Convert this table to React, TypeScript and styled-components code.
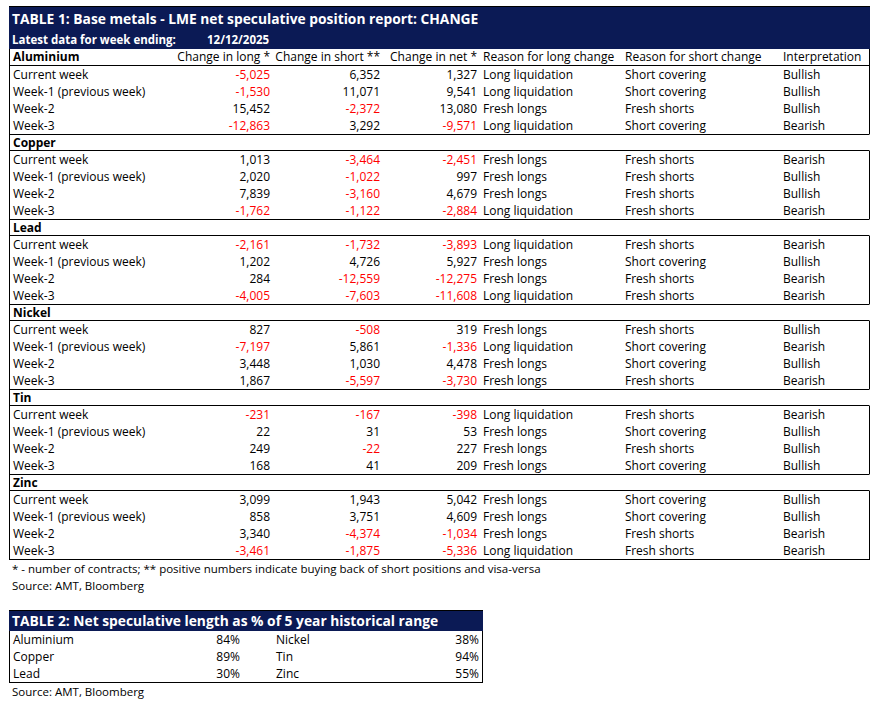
import { createGlobalStyle } from 'styled-components';
import styled from 'styled-components';
import { Fragment } from 'react';

type Row = [string, number, number, number, string, string, string];

const sections: { name: string; rows: Row[] }[] = [
  {
    name: 'Aluminium',
    rows: [
      ['Current week', -5025, 6352, 1327, 'Long liquidation', 'Short covering', 'Bullish'],
      ['Week-1 (previous week)', -1530, 11071, 9541, 'Long liquidation', 'Short covering', 'Bullish'],
      ['Week-2', 15452, -2372, 13080, 'Fresh longs', 'Fresh shorts', 'Bullish'],
      ['Week-3', -12863, 3292, -9571, 'Long liquidation', 'Short covering', 'Bearish'],
    ],
  },
  {
    name: 'Copper',
    rows: [
      ['Current week', 1013, -3464, -2451, 'Fresh longs', 'Fresh shorts', 'Bearish'],
      ['Week-1 (previous week)', 2020, -1022, 997, 'Fresh longs', 'Fresh shorts', 'Bullish'],
      ['Week-2', 7839, -3160, 4679, 'Fresh longs', 'Fresh shorts', 'Bullish'],
      ['Week-3', -1762, -1122, -2884, 'Long liquidation', 'Fresh shorts', 'Bearish'],
    ],
  },
  {
    name: 'Lead',
    rows: [
      ['Current week', -2161, -1732, -3893, 'Long liquidation', 'Fresh shorts', 'Bearish'],
      ['Week-1 (previous week)', 1202, 4726, 5927, 'Fresh longs', 'Short covering', 'Bullish'],
      ['Week-2', 284, -12559, -12275, 'Fresh longs', 'Fresh shorts', 'Bearish'],
      ['Week-3', -4005, -7603, -11608, 'Long liquidation', 'Fresh shorts', 'Bearish'],
    ],
  },
  {
    name: 'Nickel',
    rows: [
      ['Current week', 827, -508, 319, 'Fresh longs', 'Fresh shorts', 'Bullish'],
      ['Week-1 (previous week)', -7197, 5861, -1336, 'Long liquidation', 'Short covering', 'Bearish'],
      ['Week-2', 3448, 1030, 4478, 'Fresh longs', 'Short covering', 'Bullish'],
      ['Week-3', 1867, -5597, -3730, 'Fresh longs', 'Fresh shorts', 'Bearish'],
    ],
  },
  {
    name: 'Tin',
    rows: [
      ['Current week', -231, -167, -398, 'Long liquidation', 'Fresh shorts', 'Bearish'],
      ['Week-1 (previous week)', 22, 31, 53, 'Fresh longs', 'Short covering', 'Bullish'],
      ['Week-2', 249, -22, 227, 'Fresh longs', 'Fresh shorts', 'Bullish'],
      ['Week-3', 168, 41, 209, 'Fresh longs', 'Short covering', 'Bullish'],
    ],
  },
  {
    name: 'Zinc',
    rows: [
      ['Current week', 3099, 1943, 5042, 'Fresh longs', 'Short covering', 'Bullish'],
      ['Week-1 (previous week)', 858, 3751, 4609, 'Fresh longs', 'Short covering', 'Bullish'],
      ['Week-2', 3340, -4374, -1034, 'Fresh longs', 'Fresh shorts', 'Bearish'],
      ['Week-3', -3461, -1875, -5336, 'Long liquidation', 'Fresh shorts', 'Bearish'],
    ],
  },
];

const lengths = [
  ['Aluminium', '84%', 'Nickel', '38%'],
  ['Copper', '89%', 'Tin', '94%'],
  ['Lead', '30%', 'Zinc', '55%'],
];

const fmt = (n: number) => (n < 0 ? '-' : '') + Math.abs(n).toLocaleString('en-US');

const GlobalStyle = createGlobalStyle`
  body {
    margin: 0;
    background: #fff;
    font-family: 'Open Sans', 'Liberation Sans', sans-serif;
    color: #000;
  }
`;

const Page = styled.div`
  padding: 6px 0 0 9px;
  width: 861px;
  font-size: 12px;
  line-height: 17px;
`;

const TitleBar = styled.div`
  background: #0b1a55;
  color: #fff;
  font-weight: 700;
  border-top: 1px solid #000;
`;

const Title = styled.div<{ $h?: number }>`
  font-size: 13.8px;
  height: ${(p) => p.$h || 24}px;
  line-height: ${(p) => p.$h || 24}px;
  padding-left: 3px;
`;

const SubTitle = styled.div`
  display: flex;
  height: 18px;
  line-height: 18px;
  padding-left: 3px;
  font-size: 11.5px;
  span:first-child {
    width: 195px;
  }
`;

const cols = '161px 102px 110px 97px 142px 158px 90px';

const HeadRow = styled.div<{ $first?: boolean }>`
  display: grid;
  grid-template-columns: ${cols};
  height: ${(p) => (p.$first ? 16 : 15)}px;
  border-left: 1px solid #000;
  border-right: 1px solid ${(p) => (p.$first ? '#000' : 'transparent')};
  border-top: ${(p) => (p.$first ? 'none' : '1px solid #000')};
  border-bottom: 1px solid #000;
`;

const DataGrid = styled.div<{ $last?: boolean }>`
  display: grid;
  grid-template-columns: ${cols};
  border-left: 1px solid #000;
  border-right: 1px solid #000;
  border-bottom: ${(p) => (p.$last ? '1px solid #000' : 'none')};
`;

const Cell = styled.div<{ $num?: boolean; $neg?: boolean; $bold?: boolean }>`
  height: 17px;
  white-space: nowrap;
  overflow: hidden;
  text-align: ${(p) => (p.$num ? 'right' : 'left')};
  padding: ${(p) => (p.$num ? '0 3px 0 0' : '0 0 0 3px')};
  color: ${(p) => (p.$neg ? '#ff0000' : '#000')};
  font-weight: ${(p) => (p.$bold ? 700 : 400)};
`;

const HeadCell = styled(Cell)`
  height: 15px;
  line-height: 15px;
`;

const Note = styled.div`
  padding-left: 3px;
  height: 17px;
  font-size: 11.5px;
`;

const Table2 = styled.div`
  margin-top: 16px;
  width: 474px;
`;

const LenGrid = styled.div`
  display: grid;
  grid-template-columns: 196px 37px 30px 1fr 59px;
  border: 1px solid #000;
  border-top: none;
`;

export default function App() {
  return (
    <>
      <GlobalStyle />
      <Page>
        <TitleBar>
          <Title>TABLE 1: Base metals - LME net speculative position report: CHANGE</Title>
          <SubTitle>
            <span>Latest data for week ending:</span>
            <span>12/12/2025</span>
          </SubTitle>
        </TitleBar>
        {sections.map((s, i) => (
          <div key={s.name}>
            <HeadRow $first={i === 0}>
              <HeadCell $bold>{s.name}</HeadCell>
              {i === 0 ? (
                <>
                  <HeadCell $num>Change in long *</HeadCell>
                  <HeadCell $num>Change in short **</HeadCell>
                  <HeadCell $num>Change in net *</HeadCell>
                  <HeadCell>Reason for long change</HeadCell>
                  <HeadCell>Reason for short change</HeadCell>
                  <HeadCell>Interpretation</HeadCell>
                </>
              ) : null}
            </HeadRow>
            <DataGrid $last={i === sections.length - 1}>
              {s.rows.map((r) => (
                <Fragment key={r[0]}>
                  <Cell>{r[0]}</Cell>
                  <Cell $num $neg={r[1] < 0}>{fmt(r[1])}</Cell>
                  <Cell $num $neg={r[2] < 0}>{fmt(r[2])}</Cell>
                  <Cell $num $neg={r[3] < 0}>{fmt(r[3])}</Cell>
                  <Cell>{r[4]}</Cell>
                  <Cell>{r[5]}</Cell>
                  <Cell>{r[6]}</Cell>
                </Fragment>
              ))}
            </DataGrid>
          </div>
        ))}
        <Note>* - number of contracts; ** positive numbers indicate buying back of short positions and visa-versa</Note>
        <Note>Source: AMT, Bloomberg</Note>
        <Table2>
          <TitleBar>
            <Title $h={20}>TABLE 2: Net speculative length as % of 5 year historical range</Title>
          </TitleBar>
          <LenGrid>
            {lengths.map((r) => (
              <Fragment key={r[0]}>
                <Cell>{r[0]}</Cell>
                <Cell $num>{r[1]}</Cell>
                <Cell />
                <Cell>{r[2]}</Cell>
                <Cell $num>{r[3]}</Cell>
              </Fragment>
            ))}
          </LenGrid>
          <Note>Source: AMT, Bloomberg</Note>
        </Table2>
      </Page>
    </>
  );
}
